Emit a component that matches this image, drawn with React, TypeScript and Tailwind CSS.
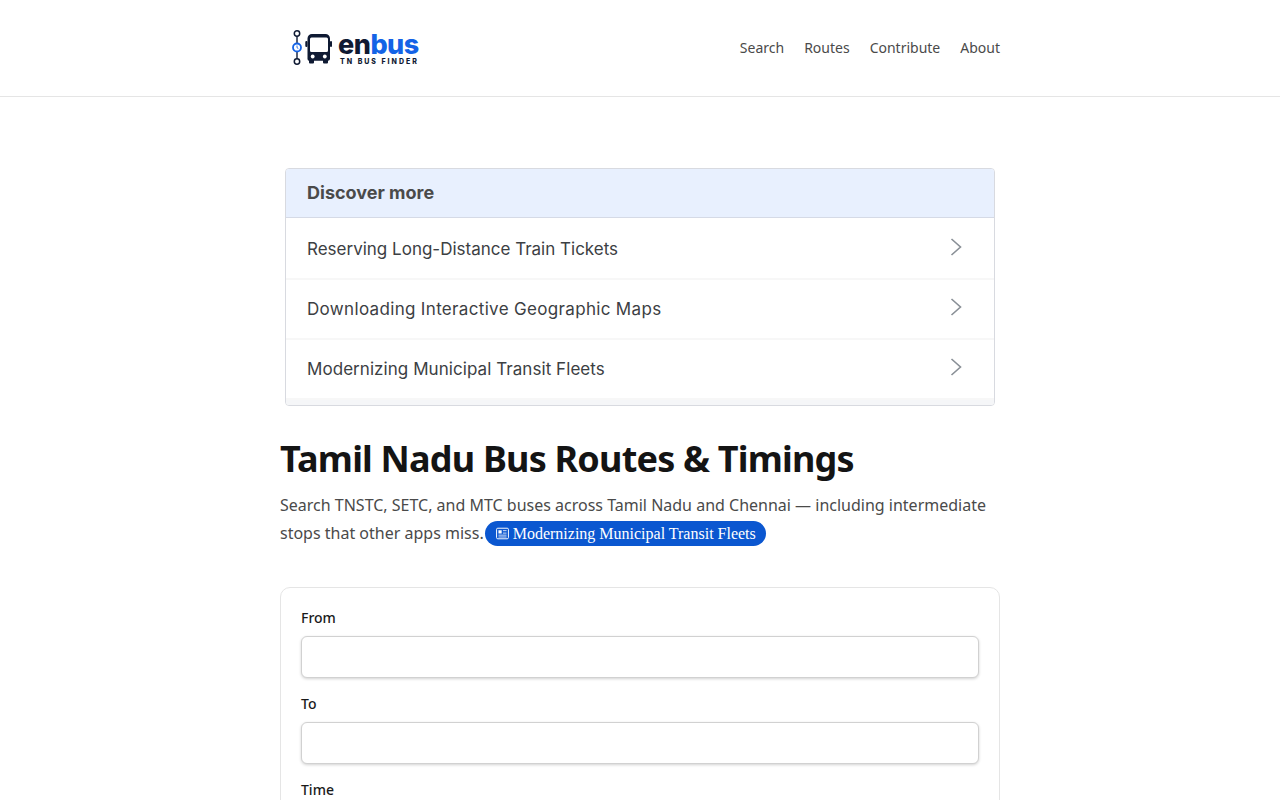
const topics = [
  { label: 'Reserving Long-Distance Train Tickets', tracking: 'tracking-normal' },
  { label: 'Downloading Interactive Geographic Maps', tracking: 'tracking-[0.33px]' },
  { label: 'Modernizing Municipal Transit Fleets', tracking: 'tracking-[0.06px]' },
];

const navLinks = ['Search', 'Routes', 'Contribute', 'About'];

function Logo() {
  return (
    <div className="flex items-center">
      <svg width="42" height="38" viewBox="0 0 42 38" fill="none">
        {/* route line with stops */}
        <path d="M7 6.500V31" stroke="#1e2a44" strokeWidth="1.500" />
        <circle cx="7" cy="4.500" r="2.700" fill="#fff" stroke="#0f1a33" strokeWidth="1.500" />
        <circle cx="7" cy="32.500" r="2.700" fill="#fff" stroke="#0f1a33" strokeWidth="1.500" />
        <circle cx="7" cy="18.500" r="4" fill="#fff" stroke="#1463e6" strokeWidth="1.800" />
        <path d="M7 16.500v2.200l1.300.8" stroke="#1463e6" strokeWidth="0.900" />
        {/* bus */}
        <rect x="15.300" y="12" width="2.200" height="6" rx="1" fill="#0f1a33" />
        <rect x="40" y="12" width="2" height="6" rx="1" fill="#0f1a33" />
        <path
          fillRule="evenodd"
          d="M22 5h13.500a4.500 4.500 0 0 1 4.500 4.500V30a2 2 0 0 1-2 1.800v1.700a1 1 0 0 1-1 1h-3a1 1 0 0 1-1-1v-1.700H24v1.700a1 1 0 0 1-1 1h-3a1 1 0 0 1-1-1v-1.700a2 2 0 0 1-1.500-1.800V9.500A4.500 4.500 0 0 1 22 5Zm-.500 3.500a1.500 1.500 0 0 0-1.500 1.500v11.500a1.500 1.500 0 0 0 1.500 1.500h15a1.500 1.500 0 0 0 1.500-1.500V10a1.500 1.500 0 0 0-1.500-1.500h-15Z"
          fill="#0f1a33"
        />
        <circle cx="22.700" cy="27.500" r="1.900" fill="#fff" />
        <circle cx="34.800" cy="27.500" r="1.900" fill="#fff" />
      </svg>
      <div className="ml-[6px] flex flex-col items-start">
        <div className="pt-[3px] font-['Inter',sans-serif] text-[27px] leading-[24px] font-extrabold tracking-[-0.5px]">
          <span className="text-[#0f1a33]">en</span>
          <span className="text-[#1463e6]">bus</span>
        </div>
        <div className="mt-[1px] ml-[2px] font-['Inter',sans-serif] text-[7px] leading-[8px] font-extrabold tracking-[2px] text-[#0f1a33]">
          TN BUS FINDER
        </div>
      </div>
    </div>
  );
}

function Field({ label }: { label: string }) {
  return (
    <div className="mb-[16px]">
      <label className="mb-[8px] block text-[14px] leading-[20px] font-medium text-[#1a1a1a]">{label}</label>
      <div className="h-[42px] rounded-[6px] border border-[#d1d1d1] bg-white shadow-[0_1px_3px_rgba(0,0,0,0.18)]" />
    </div>
  );
}

export default function App() {
  return (
    <div className="h-[800px] overflow-hidden bg-white font-['Noto_Sans',sans-serif]">
      {/* Header */}
      <header className="h-[97px] border-b border-[#e5e5e5]">
        <div className="mx-auto flex h-[96px] w-[720px] items-center justify-between">
          <div className="ml-[10px]">
            <Logo />
          </div>
          <nav className="flex gap-[20px]">
            {navLinks.map((link) => (
              <a key={link} className="text-[14px] leading-[20px] text-[#4a4a4a]">
                {link}
              </a>
            ))}
          </nav>
        </div>
      </header>

      <main className="mx-auto w-[720px]">
        {/* Discover more box */}
        <div className="mx-[5px] mt-[71px] h-[238px] overflow-hidden rounded-[4px] border border-[#d8dae0] bg-white">
          <div className="flex h-[49px] items-center border-b border-[#d5dae6] bg-[#e8f0fe] pb-[2px] pl-[21px] font-['Inter',sans-serif] text-[18px] font-bold text-[#4a4a4a]">
            Discover more
          </div>
          <div className="pt-[2px]">
            {topics.map((topic) => (
              <div
                key={topic.label}
                className="flex h-[60px] items-center justify-between border-b-2 border-[#f7f7f7] pt-[2px] pr-[32px] pl-[21px]"
              >
                <span className={`font-['Inter',sans-serif] text-[17px] text-[#3c4043] ${topic.tracking}`}>
                  {topic.label}
                </span>
                <svg width="12" height="18" viewBox="0 0 12 18" fill="none" className="mb-[6px]">
                  <path d="M1.500 1L10.500 9L1.500 17" stroke="#8a9097" strokeWidth="1.600" />
                </svg>
              </div>
            ))}
          </div>
          <div className="h-[6px] bg-[#f5f6f8]" />
        </div>

        {/* Hero */}
        <h1 className="mt-[28px] text-[36px] leading-[50px] font-bold tracking-[-0.8px] text-[#141414]">
          Tamil Nadu Bus Routes &amp; Timings
        </h1>
        <p className="mt-[7px] text-[16px] leading-[28px] text-[#4a4a4a]">
          Search TNSTC, SETC, and MTC buses across Tamil Nadu and Chennai — including intermediate stops that other
          apps miss.
          <a className="ml-[1px] inline-flex h-[25px] -translate-y-[1px] items-center rounded-full bg-[#0b57d0] pr-[10px] pl-[11px] align-middle font-['Liberation_Serif',serif] text-[16px] text-white">
            <svg width="13" height="13" viewBox="0 0 16 16" fill="none" className="mr-[4px]">
              <rect x="0.700" y="1.500" width="14.600" height="13" rx="1.500" stroke="#fff" strokeWidth="1.200" />
              <rect x="3" y="4" width="4" height="4" fill="#fff" />
              <path d="M8.500 4.500h4.500M8.500 7.500h4.500M3 10h10M3 12.300h10" stroke="#fff" strokeWidth="1" />
            </svg>
            Modernizing Municipal Transit Fleets
          </a>
        </p>

        {/* Search form */}
        <div className="mt-[40px] rounded-[10px] border border-[#e5e5e5] bg-white p-[20px]">
          <Field label="From" />
          <Field label="To" />
          <Field label="Time" />
        </div>
      </main>
    </div>
  );
}
